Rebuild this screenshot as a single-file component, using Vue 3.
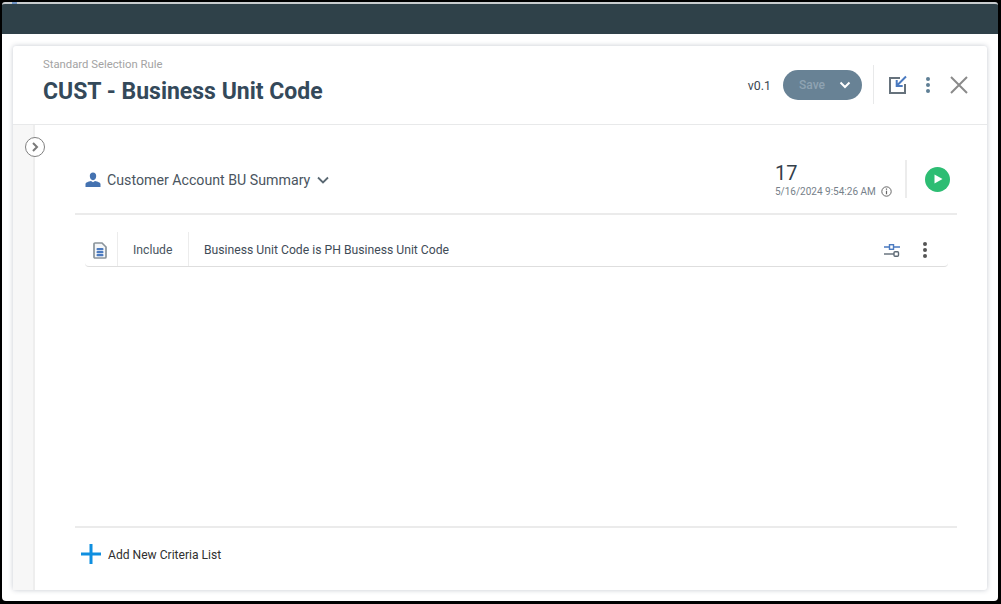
<script setup>
const title = 'CUST - Business Unit Code'
</script>

<template>
  <div class="window">
    <div class="topbar"></div>
    <div class="stage">
      <section class="card">
        <header class="head">
          <div class="titles">
            <div class="kicker">Standard Selection Rule</div>
            <h1 class="title">{{ title }}</h1>
          </div>
          <div class="actions">
            <span class="version">v0.1</span>
            <div class="save">
              <span>Save</span>
              <svg width="12" height="8" viewBox="0 0 12 8"><path d="M1.5 1.5 6 6l4.5-4.5" fill="none" stroke="#fff" stroke-width="2"/></svg>
            </div>
            <div class="tools">
              <svg class="export" width="20" height="20" viewBox="0 0 20 20">
                <path d="M12 3H2v15h15V9" fill="none" stroke="#66727c" stroke-width="2"/>
                <path d="M18 1.500 9.500 10M8.700 5v6h6" fill="none" stroke="#4a7ac0" stroke-width="2"/>
              </svg>
              <svg width="6" height="18" viewBox="0 0 6 18"><g fill="#5f7f95"><circle cx="3" cy="3" r="2"/><circle cx="3" cy="9" r="2"/><circle cx="3" cy="15" r="2"/></g></svg>
              <svg width="18" height="18" viewBox="0 0 18 18"><path d="M1 1l16 16M17 1 1 17" stroke="#8a8a8a" stroke-width="2" fill="none"/></svg>
            </div>
          </div>
        </header>
        <div class="body">
          <aside class="rail">
            <button class="toggle">
              <svg width="10" height="10" viewBox="0 0 10 10"><path d="M3 1l4 4-4 4" fill="none" stroke="#7a7a7a" stroke-width="2"/></svg>
            </button>
          </aside>
          <main class="main">
            <div class="source">
              <div class="picker">
                <svg width="16" height="16" viewBox="0 0 16 16"><path fill="#4472b0" d="M8 .5c2 0 3.200 1.400 3.200 3.600C11.200 6.300 10 8.300 8 8.300S4.800 6.300 4.800 4.100C4.800 1.900 6 .5 8 .5Zm-2 8.600 2 1.200 2-1.200c2.600.6 5.500 1.400 5.500 3.200V15H.5v-2.700c0-1.800 2.900-2.600 5.500-3.200Z"/></svg>
                <span class="picker-name">Customer Account BU Summary</span>
                <svg width="12" height="8" viewBox="0 0 12 8"><path d="M1 1.500l5 5 5-5" fill="none" stroke="#5a6872" stroke-width="1.800"/></svg>
              </div>
              <div class="result">
                <div class="count-block">
                  <div class="count">17</div>
                  <div class="stamp">
                    <span>5/16/2024 9:54:26 AM</span>
                    <svg width="11" height="11" viewBox="0 0 11 11"><circle cx="5.500" cy="5.500" r="4.700" fill="none" stroke="#666" stroke-width="1"/><path d="M5.500 4.800v3.400M5.500 2.600v1.200" stroke="#666" stroke-width="1.200"/></svg>
                  </div>
                </div>
                <div class="run-wrap">
                  <span class="run"><svg width="10" height="10" viewBox="0 0 10 10"><path d="M1.500 0.500 9.500 5l-8 4.500Z" fill="#fff"/></svg></span>
                </div>
              </div>
            </div>
            <div class="list">
              <div class="row">
                <div class="cell-icon">
                  <svg width="14" height="17" viewBox="0 0 14 17">
                    <path d="M2 1h7l4 4v10a1 1 0 0 1-1 1H2a1 1 0 0 1-1-1V2a1 1 0 0 1 1-1Z" fill="#f4f6f8" stroke="#8a949b" stroke-width="1.700"/>
                    <g fill="#4a7ac0"><rect x="3.500" y="6" width="7" height="2.300" rx="1"/><rect x="3.500" y="9" width="7" height="2.300" rx="1"/><rect x="3.500" y="12" width="7" height="2.300" rx="1"/></g>
                  </svg>
                </div>
                <div class="cell-type">Include</div>
                <div class="cell-text">Business Unit Code is PH Business Unit Code</div>
                <div class="cell-tools">
                  <svg width="16" height="14" viewBox="0 0 16 14">
                    <path d="M0 4h5.500M9.500 4H16" stroke="#4a7ac0" stroke-width="1.400"/>
                    <rect x="5.500" y="1.700" width="4" height="4.600" fill="#fff" stroke="#4a7ac0" stroke-width="1.400"/>
                    <path d="M0 11h10" stroke="#5f6b76" stroke-width="1.400"/>
                    <rect x="10" y="8.700" width="4.500" height="4.600" rx="1" fill="#fff" stroke="#5f6b76" stroke-width="1.400"/>
                  </svg>
                  <svg width="6" height="18" viewBox="0 0 6 18"><g fill="#555"><circle cx="3" cy="3" r="2"/><circle cx="3" cy="9" r="2"/><circle cx="3" cy="15" r="2"/></g></svg>
                </div>
              </div>
            </div>
            <footer class="foot">
              <svg width="20" height="20" viewBox="0 0 20 20"><path d="M10 0v20M0 10h20" stroke="#0f8fe0" stroke-width="3"/></svg>
              <span class="foot-label">Add New Criteria List</span>
            </footer>
          </main>
        </div>
      </section>
    </div>
  </div>
</template>

<style>
html, body { margin: 0; background: #000; overflow: hidden; }
</style>

<style scoped>
.window {
  box-sizing: border-box;
  width: 1001px;
  height: 604px;
  padding: 2px 3px 3px 2px;
  background: #000;
  display: flex;
  flex-direction: column;
  font-family: Roboto, "Liberation Sans", sans-serif;
}
.topbar {
  height: 30px;
  flex: none;
  background: #2f4149;
  border-top: 2px solid #c9cdcf;
  border-radius: 3px 3px 0 0;
  position: relative;
}
.topbar::before {
  content: "";
  position: absolute;
  top: -2px;
  left: 10px;
  width: 5px;
  height: 2px;
  background: #6f93c4;
}
.stage {
  flex: 1;
  min-height: 0;
  display: flex;
  background: #fff;
  padding: 12px 11px 11px 11px;
  border-radius: 0 0 4px 4px;
}
.card {
  flex: 1;
  display: flex;
  flex-direction: column;
  background: #fff;
  border-radius: 3px;
  box-shadow: 0 0 5px rgba(70, 85, 110, 0.32);
}
.head {
  height: 79px;
  flex: none;
  box-sizing: border-box;
  display: flex;
  justify-content: space-between;
  border-bottom: 1px solid #e8e9ea;
  padding: 12px 19px 0 30px;
}
.kicker { font-size: 11.3px; line-height: 14px; color: #a3a3a3; }
.title {
  margin: 6px 0 0;
  font-size: 23px;
  line-height: 28px;
  font-weight: 700;
  color: #34495a;
}
.actions { display: flex; align-items: flex-start; height: 39px; margin-top: 7px; }
.version { font-size: 12.4px; line-height: 16px; color: #3b4751; margin: 13px 12px 0 0; }
.save {
  width: 79px;
  height: 30px;
  margin-top: 5px;
  box-sizing: border-box;
  padding: 0 11px 0 16px;
  border-radius: 15px;
  background: #688295;
  color: #8fa3b2;
  font-size: 12px;
  font-weight: 500;
  display: flex;
  align-items: center;
  justify-content: space-between;
}
.tools {
  height: 39px;
  margin-left: 11px;
  padding-left: 14px;
  border-left: 1px solid #e8e9ea;
  display: flex;
  align-items: center;
  gap: 19px;
}
.tools .export { margin-right: -2px; }
.body { flex: 1; min-height: 0; display: flex; }
.rail {
  width: 22px;
  flex: none;
  box-sizing: border-box;
  background: #f7f7f7;
  border-right: 2px solid #eeeeee;
  position: relative;
}
.toggle {
  position: absolute;
  top: 12px;
  left: 12px;
  width: 20px;
  height: 20px;
  padding: 0;
  border: 1px solid #808080;
  border-radius: 50%;
  background: #fff;
  display: flex;
  align-items: center;
  justify-content: center;
}
.main {
  flex: 1;
  min-width: 0;
  display: flex;
  flex-direction: column;
  padding: 0 30px 0 40px;
}
.source {
  height: 90px;
  flex: none;
  box-sizing: border-box;
  border-bottom: 2px solid #ebebeb;
  display: flex;
  align-items: center;
  justify-content: space-between;
  padding: 20px 7px 0 10px;
}
.picker { display: flex; align-items: center; gap: 6px; margin-top: 2px; font-size: 14.2px; color: #4a5560; }
.picker-name { margin-right: 1px; }
.result { display: flex; align-items: center; }
.count-block { width: 117px; }
.count { font-size: 20px; line-height: 24px; color: #34404a; }
.stamp { display: flex; align-items: center; gap: 5px; margin-top: 1px; font-size: 10px; line-height: 12px; color: #76818a; }
.run-wrap {
  height: 38px;
  margin-left: 13px;
  padding-left: 18px;
  border-left: 2px solid #ececec;
  display: flex;
  align-items: center;
}
.run {
  width: 25px;
  height: 25px;
  border-radius: 50%;
  background: #2dbd73;
  display: flex;
  align-items: center;
  justify-content: center;
}
.list { flex: 1; min-height: 0; padding: 0 9px 0 10px; }
.row {
  margin-top: 17px;
  height: 35px;
  box-sizing: border-box;
  display: flex;
  align-items: stretch;
  border-bottom: 1px solid #dedede;
  border-radius: 0 0 4px 4px;
  font-size: 12.2px;
  color: #3f4c57;
}
.row > div { display: flex; align-items: center; padding-top: 2px; box-sizing: border-box; }
.cell-icon { width: 33px; justify-content: center; padding-right: 2px; border-right: 1px solid #ececec; }
.cell-type { width: 71px; padding-left: 15px; border-right: 1px solid #ececec; color: #4a5560; }
.cell-text { flex: 1; padding-left: 15px; }
.cell-tools { gap: 22px; padding-right: 20px; }
.foot {
  height: 64px;
  flex: none;
  box-sizing: border-box;
  border-top: 2px solid #ebebeb;
  display: flex;
  align-items: center;
  gap: 7px;
  padding: 0 0 10px 6px;
  font-size: 12.1px;
  color: #2f2f2f;
}
.foot-label { padding-top: 2px; }
</style>
